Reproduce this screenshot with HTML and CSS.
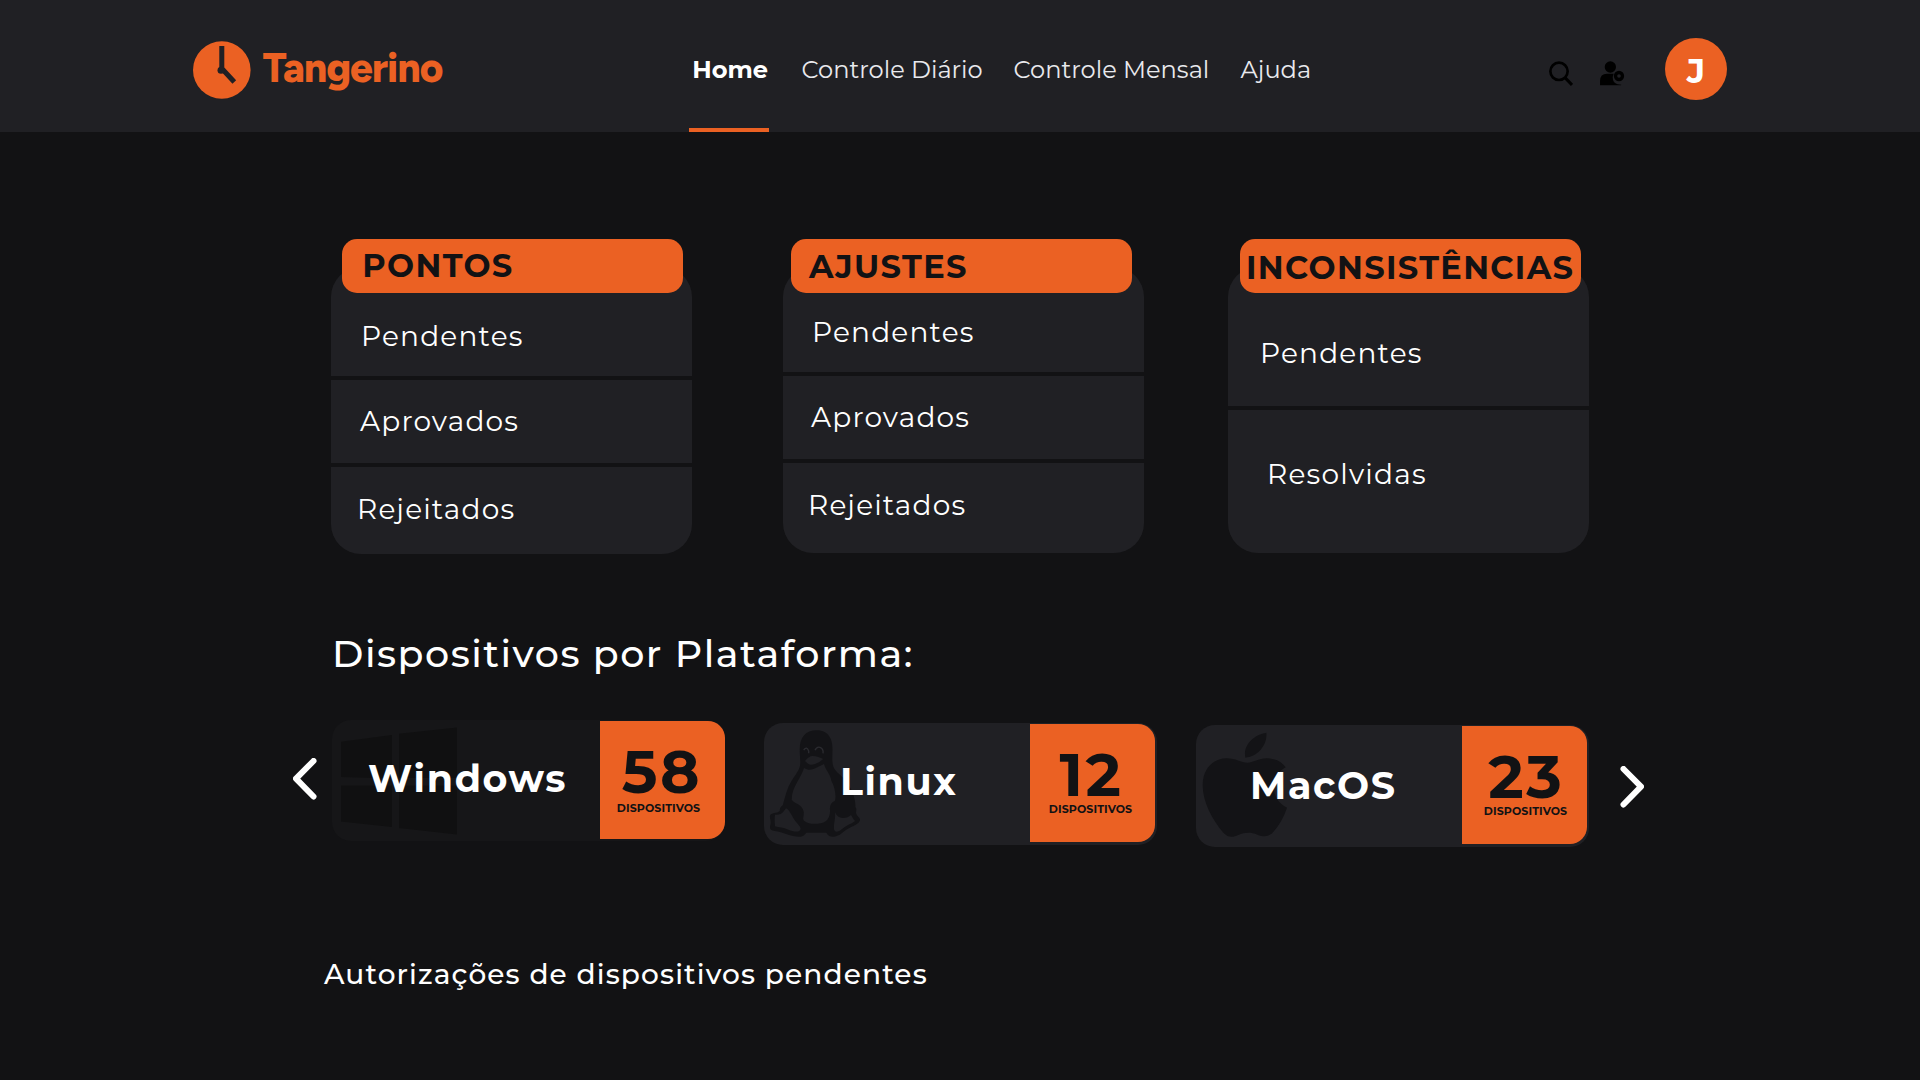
FILE: index.html
```html
<!DOCTYPE html>
<html lang="pt-BR">
<head>
<meta charset="utf-8">
<title>Tangerino</title>
<link rel="stylesheet" href="styles.css">
</head>
<body>
<header class="topbar">
  <a class="brand">
    <svg class="brand-clock" viewBox="0 0 58 58"><circle cx="28.800" cy="29" r="28.800" fill="#eb6123"/><path d="M28.800 5v22.500l12.500 13.500" fill="none" stroke="#202024" stroke-width="5"/><circle cx="28" cy="29.300" r="3.500" fill="#202024"/></svg>
    <span class="brand-name">Tangerino</span>
  </a>
  <nav class="nav">
    <a class="nav-link active">Home</a>
    <a class="nav-link daily">Controle Diário</a>
    <a class="nav-link monthly">Controle Mensal</a>
    <a class="nav-link help">Ajuda</a>
  </nav>
  <div class="actions">
    <svg class="icon-search" viewBox="0 0 72 76"><circle cx="30" cy="31" r="26" fill="none" stroke="#000" stroke-width="8"/><path d="M48 50l21 22" stroke="#000" stroke-width="9"/></svg>
    <svg class="icon-user" viewBox="0 0 74 76"><circle cx="31" cy="18" r="17"/><path d="M0 73V60q0-22 21-22h20q-4 8-2 18t14 14l11 1-1 2z"/><circle cx="57" cy="45" r="10.500" fill="none" stroke="#000" stroke-width="10"/></svg>
    <div class="avatar">J</div>
  </div>
</header>
<main>
  <section class="summary">
    <article class="card points">
      <h2 class="tab">PONTOS</h2>
      <div class="panel">
        <div class="row pending">Pendentes</div>
        <div class="row approved">Aprovados</div>
        <div class="row rejected">Rejeitados</div>
      </div>
    </article>
    <article class="card adjustments">
      <h2 class="tab">AJUSTES</h2>
      <div class="panel">
        <div class="row pending">Pendentes</div>
        <div class="row approved">Aprovados</div>
        <div class="row rejected">Rejeitados</div>
      </div>
    </article>
    <article class="card issues">
      <h2 class="tab">INCONSISTÊNCIAS</h2>
      <div class="panel">
        <div class="row pending">Pendentes</div>
        <div class="row solved">Resolvidas</div>
      </div>
    </article>
  </section>
  <h3 class="section-title">Dispositivos por Plataforma:</h3>
  <section class="platforms">
    <svg class="arrow prev" viewBox="0 0 24 42"><path d="M20.500 3L3 20.700 20.500 38.500"/></svg>
    <article class="platform windows">
      <svg class="platform-logo" viewBox="0 0 128 122"><path d="M9 21.700L60 15v43.500L9 57zM67 13.800L125 7.500v50.500H67zM9 65.500h51V107L9 101.500zM67 65.500h58v49L67 108z"/></svg>
      <span class="platform-name">Windows</span>
      <div class="count"><strong>58</strong><small>DISPOSITIVOS</small></div>
    </article>
    <article class="platform linux">
      <svg class="platform-logo" viewBox="0 0 128 122">
        <g transform="translate(-24.300 -23.300) scale(.33333)">
          <path fill="#131316" d="M231 92c-33 0-51 21-51 57 0 27 5 43-2 58-6 15-25 35-35 63-8 22-10 35-14 47-7 5-9 10-9 17-8 8-27 4-29 14-2 8 5 15 0 32-1 8 2 12 14 14 25 3 50 18 77 17 10-1 12-6 18-12h60c4 9 12 13 23 12 18-2 27-16 42-24 14-7 32-13 36-25 1-8-10-12-12-22 0-8 3-13-2-18 2-24-13-62-33-84-13-15-33-25-35-45-4-24 4-52-6-76-9-18-23-25-42-25z"/>
          <path fill="#202024" d="M193 205c11 7 23 7 34 1l26-13c4 18 19 30 22 50 10 18 15 45 11 60-12 5-17 14-15 30 0 20-9 38-38 39-18 1-29-1-40-9-5-6-1-11-1-20 2-12-7-24-18-30-7-4-13-6-18-13 0-38 28-64 37-95zM106 345c12 1 20-2 25-9l8-10c9 4 16 19 23 31 8 13 20 21 21 30-3 13-21 9-37 3-14-6-29-7-40-10-1-13-2-24 0-35zM286 338c5 12 14 18 25 17 9 0 17-3 23-9 4 6 6 12 12 18-13 10-27 13-39 24-12 10-22 11-24 1-2-16 5-33 3-51zM196 184c7-9 14-15 23-15 11 0 24 5 31 9-9 9-24 17-36 17-8 0-13-6-18-11z"/>
          <g fill="none" stroke="#2b2b30" stroke-width="4"><path d="M192 151q9-13 15 3v7M226 152q5-12 15-9 11 4 9 18"/></g>
        </g>
      </svg>
      <span class="platform-name">Linux</span>
      <div class="count"><strong>12</strong><small>DISPOSITIVOS</small></div>
    </article>
    <article class="platform macos">
      <svg class="platform-logo" viewBox="0 0 128 122"><g transform="translate(-16.300 -25) scale(.33333)"><path d="M260 98c4 39-28 73-63 75-8-37 25-69 63-75zM203 188c17 0 35-14 61-13 25 1 43 11 54 27-24 14-36 33-36 57 0 30 15 52 40 64-9 28-24 53-42 74-13 14-28 15-47 7-20-8-38-7-57 1-17 8-31 8-45-7-34-38-64-96-62-146 2-49 33-77 73-77 24 0 43 13 61 13z"/></g></svg>
      <span class="platform-name">MacOS</span>
      <div class="count"><strong>23</strong><small>DISPOSITIVOS</small></div>
    </article>
    <svg class="arrow next" viewBox="0 0 24 42"><path d="M3.500 3L21 20.700 3.500 38.500"/></svg>
  </section>
  <h3 class="pending-title">Autorizações de dispositivos pendentes</h3>
</main>
</body>
</html>
```
FILE: styles.css
```css
:root {
  --page: #121214;
  --surface: #202024;
  --accent: #eb6123;
}

* { box-sizing: border-box; }

body {
  margin: 0;
  min-height: 1080px;
  background: var(--page);
  color: #fff;
  font-family: Montserrat, Inter, "Liberation Sans", sans-serif;
  overflow-x: hidden;
}

h2, h3 { margin: 0; }

/* Top bar */
.topbar {
  display: flex;
  height: 132px;
  padding-left: 193px;
  background: var(--surface);
}

.brand {
  display: flex;
  width: 496px;
  padding-top: 41px;
}

.brand-clock { width: 58px; height: 58px; }

.brand-name {
  height: 48px;
  margin: 3px 0 0 11.5px;
  color: var(--accent);
  font-family: Figtree, Lato, sans-serif;
  font-size: 40.5px;
  font-weight: 800;
  letter-spacing: -.9px;
  line-height: 48px;
}

.nav { display: flex; height: 132px; }

.nav-link {
  height: 132px;
  color: #e9e9ed;
  font-size: 24.1px;
  line-height: 139px;
  white-space: nowrap;
}
.nav-link.active {
  width: 80px;
  padding-left: 3.2px;
  border-bottom: 4px solid var(--accent);
  color: #fff;
  font-weight: 700;
}
.daily { width: 212px; padding-left: 32.5px; }
.monthly { width: 226px; padding-left: 32.5px; }
.help { width: 103px; padding-left: 33.5px; }

.actions { display: flex; align-items: flex-start; padding-left: 239px; }
.icon-search { width: 24px; height: 25.300px; margin-top: 61px; }
.icon-user { width: 24.700px; height: 25.300px; margin: 61px 0 0 27px; }
.avatar {
  width: 62px;
  height: 62px;
  margin: 38px 0 0 40.300px;
  border-radius: 50%;
  background: var(--accent);
  font-size: 34px;
  font-weight: 700;
  line-height: 66px;
  text-align: center;
}

/* Summary cards */
.summary {
  display: flex;
  align-items: flex-start;
  gap: 84px;
  height: 422px;
  padding: 107px 0 0 331px;
}

.card { width: 361px; }
.adjustments { margin-left: 7px; }

.tab {
  position: relative;
  width: 341px;
  height: 54px;
  margin-left: 11px;
  border-radius: 15px;
  background: var(--accent);
  color: var(--page);
  font-size: 32px;
  letter-spacing: 1.35px;
  line-height: 54px;
  white-space: nowrap;
}
.points .tab { padding-left: 20.3px; }
.adjustments .tab { margin-left: 8px; padding-left: 18px; line-height: 56px; }
.issues .tab { margin-left: 12px; padding-left: 6px; line-height: 58px; }

.panel {
  display: flex;
  flex-direction: column;
  gap: 4px;
  margin-top: -26px;
}

.row {
  display: flex;
  align-items: center;
  background: var(--surface);
  font-size: 28px;
  letter-spacing: 1.2px;
  line-height: 34px;
}
.row:first-child { border-radius: 30px 30px 0 0; }
.row:last-child { border-radius: 0 0 30px 30px; }

.points .pending { height: 109px; padding: 29px 0 0 30px; }
.points .approved { height: 83px; padding: 0 0 1px 29px; }
.points .rejected { height: 87px; padding: 0 0 3px 26px; }

.adjustments .pending { height: 105px; padding: 25px 0 0 29px; }
.adjustments .approved { height: 83px; padding: 0 0 1px 28px; }
.adjustments .rejected { height: 90px; padding: 0 0 6px 25px; }

.issues .pending { height: 139px; padding: 33px 0 0 32px; }
.issues .solved { height: 143px; padding: 0 0 15px 39px; }

/* Devices by platform */
.section-title {
  height: 40px;
  margin: 80px 0 0 332px;
  font-size: 38px;
  font-weight: 500;
  letter-spacing: 1.52px;
  line-height: 40px;
}

.platforms {
  display: flex;
  align-items: flex-start;
  height: 127px;
  margin-top: 46px;
  padding-left: 292.500px;
}

.arrow {
  width: 24px;
  height: 42px;
  fill: none;
  stroke: #fff;
  stroke-width: 6;
  stroke-linecap: round;
  stroke-linejoin: round;
}
.prev { margin: 38px 15.500px 0 0; }
.next { margin: 46px 0 0 31px; }

.platform {
  display: flex;
  width: 393px;
  height: 122px;
  border-radius: 19px;
  background: var(--surface);
}
.windows { height: 121px; background: #161618; }
.linux { margin: 3px 0 0 39px; }
.macos { margin: 5px 0 0 39px; }

.platform-logo { width: 128px; height: 122px; fill: #131316; }
.windows .platform-logo { fill: #101011; }

.platform-name {
  position: relative;
  height: 40px;
  margin-top: 39px;
  font-size: 38px;
  font-weight: 700;
  letter-spacing: 1.6px;
  line-height: 40px;
}
.windows .platform-name { width: 232px; margin-left: -92px; }
.linux .platform-name { width: 190px; margin-left: -52px; }
.macos .platform-name { width: 212px; margin: 41px 0 0 -74px; }

.count {
  display: flex;
  flex-direction: column;
  align-items: center;
  width: 125px;
  height: 118px;
  margin-top: .7px;
  border-radius: 0 17px 17px 0;
  background: var(--accent);
  color: var(--page);
}
.count strong {
  height: 44px;
  margin-top: 29px;
  font-size: 60px;
  letter-spacing: 2.5px;
  line-height: 44px;
}
.count small {
  margin-top: 4px;
  font-size: 11px;
  font-weight: 700;
  letter-spacing: .1px;
  line-height: 16px;
}
.windows strong { padding-right: 1px; }
.windows small { margin-top: 6px; padding-right: 8px; }
.linux strong { padding-right: 2px; }
.linux small { padding-right: 4px; }
.macos strong { padding-left: 3.5px; }
.macos small { padding-left: 2px; }

/* Pending authorizations */
.pending-title {
  height: 30px;
  margin: 112px 0 0 324px;
  font-size: 28px;
  font-weight: 500;
  letter-spacing: 1.13px;
  line-height: 30px;
}
```
